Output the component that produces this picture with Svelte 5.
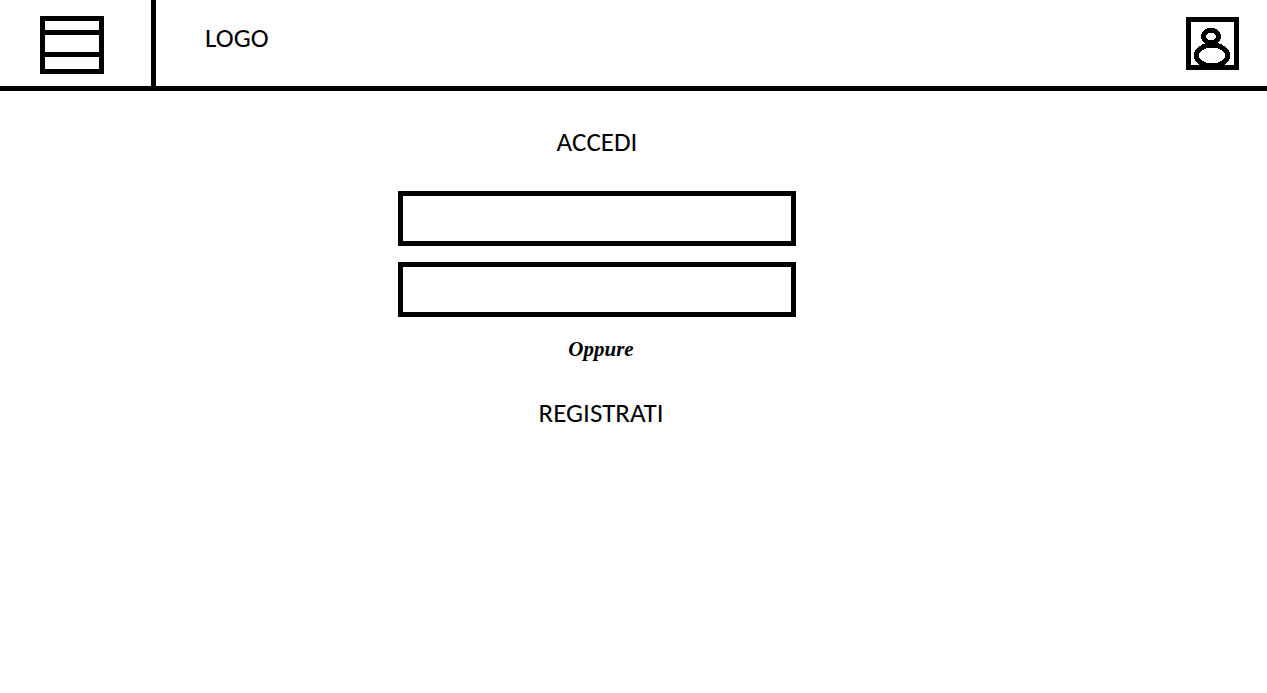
<script>
  let email = $state('');
  let password = $state('');
</script>

<header>
  <div class="menu-cell">
    <button type="button" class="icon" aria-label="Menu">
      <svg width="64" height="58" viewBox="0 0 64 58" fill="none" stroke="#000" stroke-width="5" shape-rendering="crispEdges">
        <rect x="2.5" y="2.5" width="59" height="53" />
        <path d="M0 16.5H64M0 38.5H64" />
      </svg>
    </button>
  </div>
  <a class="logo" href="#home">LOGO</a>
  <button type="button" class="icon user" aria-label="Account">
    <svg width="53" height="53" viewBox="0 0 53 53" fill="none" stroke="#000" stroke-width="5" shape-rendering="crispEdges">
      <rect x="2.5" y="2.5" width="48" height="48" />
      <ellipse cx="25" cy="19.5" rx="7.5" ry="6.5" />
      <ellipse cx="26" cy="38.5" rx="15.5" ry="10.5" />
    </svg>
  </button>
</header>

<main>
  <form onsubmit={(event) => event.preventDefault()}>
    <button type="submit" class="action">ACCEDI</button>
    <div class="fields">
      <input type="email" aria-label="Email" bind:value={email} />
      <input type="password" aria-label="Password" bind:value={password} />
    </div>
    <div class="alternative">
      <p>Oppure</p>
      <a class="action" href="#registrati">REGISTRATI</a>
    </div>
  </form>
</main>

<style>
  :global(body) {
    margin: 0;
    background: #fff;
    color: #000;
    font-family: Calibri, Carlito, Lato, sans-serif;
    font-size: 27px;
    line-height: 32px;
  }

  header {
    display: flex;
    align-items: flex-start;
    border-bottom: 5px solid #000;
  }

  .menu-cell {
    box-sizing: border-box;
    height: 86px;
    padding: 16px 47px 0 40px;
    border-right: 5px solid #000;
  }

  .icon {
    display: block;
    padding: 0;
    border: 0;
    background: none;
    cursor: pointer;
  }

  .icon svg {
    display: block;
  }

  .logo {
    margin: 22px 0 0 49px;
    color: inherit;
    text-decoration: none;
  }

  .user {
    margin: 17px 28px 0 auto;
  }

  main {
    display: flex;
    justify-content: center;
    padding: 35px 73px 35px 0;
  }

  form {
    display: flex;
    flex-direction: column;
    align-items: center;
    width: 100%;
    max-width: 398px;
  }

  .action {
    padding: 0;
    border: 0;
    background: none;
    color: inherit;
    font: inherit;
    text-decoration: none;
    cursor: pointer;
  }

  .fields {
    display: flex;
    flex-direction: column;
    gap: 16px;
    width: 100%;
    margin-top: 33px;
  }

  input {
    box-sizing: border-box;
    width: 100%;
    height: 55px;
    padding: 0 12px;
    border: 5px solid #000;
    border-radius: 0;
    background: #fff;
    color: inherit;
    font: inherit;
    outline: none;
  }

  .alternative {
    display: flex;
    flex-direction: column;
    align-items: center;
    gap: 32px;
    margin-top: 16px;
    padding-left: 8px;
  }

  p {
    margin: 0;
    font-family: "Brush Script MT", "Brush Script Std", "Liberation Serif", serif;
    font-size: 21px;
    font-style: italic;
    font-weight: bold;
  }
</style>
